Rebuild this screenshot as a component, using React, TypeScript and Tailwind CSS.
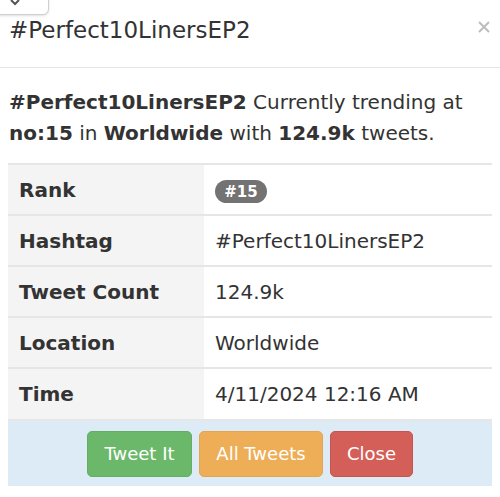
import React from "react";

const rows: { label: string; value: React.ReactNode }[] = [
  {
    label: "Rank",
    value: (
      <span className="inline-flex h-[23px] w-[52px] items-center justify-center rounded-full bg-[#737373] text-[15px] font-bold text-white">
        #15
      </span>
    ),
  },
  { label: "Hashtag", value: "#Perfect10LinersEP2" },
  { label: "Tweet Count", value: "124.9k" },
  { label: "Location", value: "Worldwide" },
  { label: "Time", value: "4/11/2024 12:16 AM" },
];

export default function App() {
  return (
    <div
      className="relative h-[497px] w-[500px] overflow-hidden bg-white text-[#333333]"
      style={{ fontFamily: '"DejaVu Sans", "Noto Sans", sans-serif' }}
    >
      <div className="absolute left-[-2px] top-[-2px] flex h-[17px] w-[51px] items-start rounded-br-[6px] border border-[#d0d0d0] bg-white pl-[10px] shadow-sm">
        <svg width="12" height="10" viewBox="0 0 12 10" className="mt-[-1px]">
          <path d="M2 2 L6 6 L10 2" stroke="#555" strokeWidth="2" fill="none" />
        </svg>
      </div>
      <div className="flex h-[68px] items-center justify-between border-b border-[#e5e5e5] pb-[8px] pl-[9px] pr-[10px]">
        <h4 className="text-[23px] leading-[30px] text-[#333]">#Perfect10LinersEP2</h4>
        <svg width="12" height="12" viewBox="0 0 12 12" className="mt-[-6px]">
          <path d="M1 1 L11 11 M11 1 L1 11" stroke="#bdbdbd" strokeWidth="2" />
        </svg>
      </div>
      <div className="px-[8px] pt-[19px]">
        <p className="pl-[1px] text-[20px] leading-[31px]">
          <b>#Perfect10LinersEP2</b> Currently trending at <b>no:15</b> in <b>Worldwide</b> with{" "}
          <b>124.9k</b> tweets.
        </p>
        <table className="mt-[14px] w-full border-collapse text-[20px]">
          <tbody>
            {rows.map((r) => (
              <tr key={r.label} className="h-[51px] border-t-2 border-[#e6e6e6]">
                <td className="w-[196px] bg-[#f4f4f4] pl-[11px] font-bold">{r.label}</td>
                <td className="pl-[11px]">{r.value}</td>
              </tr>
            ))}
          </tbody>
        </table>
        <div className="flex h-[67px] items-center justify-center gap-[7px] border-t-2 border-[#e6e6e6] bg-[#dcebf5]">
          <button className="h-[46px] w-[105px] rounded-[5px] border border-[#64ae64] bg-[#6cb86a] text-[18px] text-white">
            Tweet It
          </button>
          <button className="h-[46px] w-[124px] rounded-[5px] border border-[#e3a54e] bg-[#eeae58] text-[18px] text-white">
            All Tweets
          </button>
          <button className="h-[46px] w-[83px] rounded-[5px] border border-[#c65450] bg-[#d35f58] text-[18px] text-white">
            Close
          </button>
        </div>
      </div>
    </div>
  );
}
